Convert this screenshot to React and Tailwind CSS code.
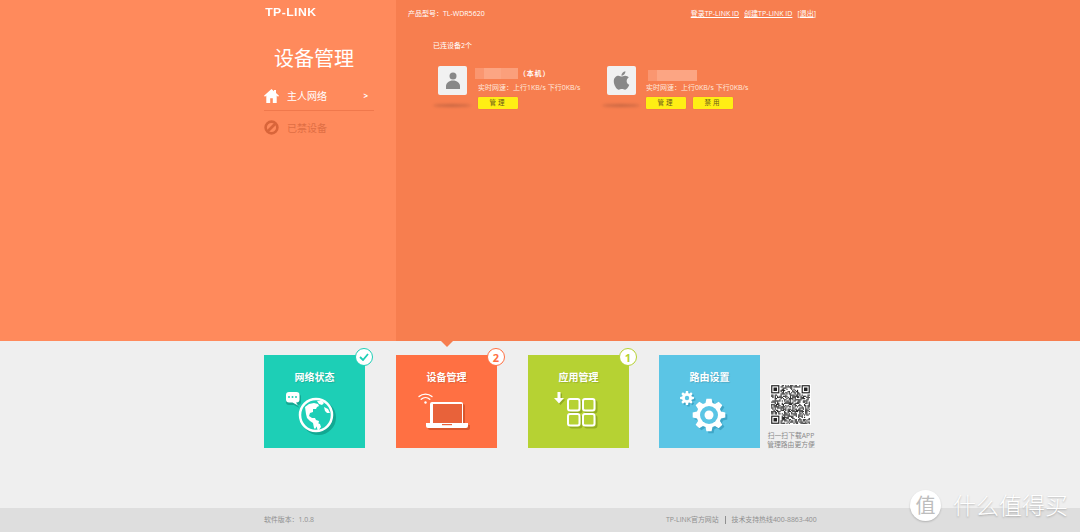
import React from "react";
import { FaApple } from "react-icons/fa";

const gearPath = (cx, cy, outer, inner, teeth) => {
  let d = "";
  const step = (Math.PI * 2) / teeth;
  for (let i = 0; i < teeth; i++) {
    const a = i * step;
    const pts = [
      [inner, a - step * 0.36],
      [outer, a - step * 0.2],
      [outer, a + step * 0.2],
      [inner, a + step * 0.36],
    ];
    pts.forEach(([r, t], j) => {
      d += `${i === 0 && j === 0 ? "M" : "L"}${(cx + r * Math.cos(t)).toFixed(2)} ${(cy + r * Math.sin(t)).toFixed(2)} `;
    });
  }
  return d + "Z";
};

const qrCells = (() => {
  const n = 33;
  const cells = [];
  let s = 12345;
  const inFinder = (x, y) => (x < 8 && y < 8) || (x > n - 9 && y < 8) || (x < 8 && y > n - 9);
  for (let y = 0; y < n; y++) {
    for (let x = 0; x < n; x++) {
      s = (s * 1103515245 + 12345) & 0x7fffffff;
      if (!inFinder(x, y) && (s >> 16) % 100 < 55) cells.push([x, y]);
    }
  }
  return cells;
})();

function Qr() {
  const finder = [[0, 0], [26, 0], [0, 26]];
  return (
    <svg width="41" height="41" viewBox="-1 -1 35 35" className="bg-white block">
      {qrCells.map(([x, y]) => (
        <rect key={`${x}-${y}`} x={x} y={y} width="1" height="1" fill="#222" />
      ))}
      {finder.map(([x, y]) => (
        <g key={`${x}${y}`}>
          <rect x={x + 0.5} y={y + 0.5} width="6" height="6" fill="none" stroke="#222" />
          <rect x={x + 2} y={y + 2} width="3" height="3" fill="#222" />
        </g>
      ))}
    </svg>
  );
}

function GlobeIcon() {
  return (
    <svg width="101" height="63" viewBox="0 30 101 63" className="block">
      <g fill="#12a892">
        <circle cx="54.5" cy="62.5" r="17.5" />
        <path d="M25 39h9a3 3 0 0 1 3 3v5a3 3 0 0 1-3 3h-.5l2 3-5.500-3h-5a3 3 0 0 1-3-3v-5a3 3 0 0 1 3-3z" />
      </g>
      <circle cx="52" cy="60" r="16" fill="#1DCFB6" stroke="#fff" strokeWidth="2.500" />
      <path fill="#fff" d="M41 52l4-3 5-1 4 1 1 2-2 1-1 2-3 0 0 3-3 1-1 3 3 2 3 0 1 2 3 1-1 4-3 4-1-1-1-5-3-2-3-3-1-4zM53 46l5 0 2 2-2 2-3-1zM60 52l4 2 2 4-3 0-2-2z" />
      <path fill="#fff" d="M53 68l3 1 1 3-3 4-1-3z" />
      <path fill="#fff" d="M25 37h7.500a3 3 0 0 1 3 3v4.500a3 3 0 0 1-3 3h-.5l2 3-5.500-3h-3.500a3 3 0 0 1-3-3v-4.500a3 3 0 0 1 3-3z" />
      <g fill="#1DCFB6">
        <circle cx="25" cy="42" r="1" />
        <circle cx="28.500" cy="42" r="1" />
        <circle cx="32" cy="42" r="1" />
      </g>
    </svg>
  );
}

function LaptopIcon() {
  return (
    <svg width="101" height="63" viewBox="0 30 101 63" className="block">
      <g fill="#d9572d" transform="translate(2 2)">
        <path d="M36 47h29a2 2 0 0 1 2 2v19h-33v-19a2 2 0 0 1 2-2zM30 68h42v3a2 2 0 0 1-2 2h-38a2 2 0 0 1-2-2z" />
      </g>
      <path fill="#fff" d="M36 47h29a2 2 0 0 1 2 2v19h-33v-19a2 2 0 0 1 2-2z" />
      <rect x="37" y="49" width="29" height="19" fill="#E8623A" />
      <path fill="#fff" d="M30 68h42v3a2 2 0 0 1-2 2h-38a2 2 0 0 1-2-2z" />
      <rect x="46" y="69" width="10" height="1.200" fill="#E8623A" />
      <g fill="none" stroke="#fff" strokeWidth="1.300" strokeLinecap="round">
        <path d="M23 41.500a10 10 0 0 1 13 0" />
        <path d="M25.200 44.300a6.500 6.500 0 0 1 8.600 0" />
      </g>
      <circle cx="29.500" cy="47.500" r="1.200" fill="#fff" />
    </svg>
  );
}

function AppsIcon() {
  const squares = [[40, 44], [55, 44], [40, 59], [55, 59]];
  return (
    <svg width="101" height="63" viewBox="0 30 101 63" className="block">
      <g transform="translate(2 2)" fill="none" stroke="#93ad22" strokeWidth="2">
        {squares.map(([x, y]) => (
          <rect key={`${x}${y}`} x={x} y={y} width="11.500" height="11.500" rx="2" />
        ))}
      </g>
      <path d="M29.500 37h3v6h3.500l-5 5.500-5-5.500h3.500z" fill="#93ad22" transform="translate(1.500 1.500)" />
      <g fill="#B6D233" stroke="#fff" strokeWidth="2">
        {squares.map(([x, y]) => (
          <rect key={`${x}${y}`} x={x} y={y} width="11.500" height="11.500" rx="2" />
        ))}
      </g>
      <path d="M29.500 37h3v6h3.500l-5 5.500-5-5.500h3.500z" fill="#fff" />
    </svg>
  );
}

function GearIcon() {
  return (
    <svg width="101" height="63" viewBox="0 30 101 63" className="block">
      <path d={gearPath(52, 62, 16.500, 12.500, 8)} fill="#3ea6c8" />
      <path d={gearPath(29.500, 44.500, 7, 5, 8)} fill="#3ea6c8" />
      <path d={gearPath(50, 60, 16.500, 12.500, 8)} fill="#fff" />
      <circle cx="50" cy="60" r="9" fill="#5BC5E5" />
      <circle cx="50" cy="60" r="4.500" fill="#fff" />
      <path d={gearPath(28, 43, 7, 5, 8)} fill="#fff" />
      <circle cx="28" cy="43" r="2.200" fill="#5BC5E5" />
    </svg>
  );
}

function Badge({ border, color, children }) {
  return (
    <div className={`absolute -right-[8px] -top-[7px] w-[18px] h-[18px] rounded-full bg-white border-[1.500px] flex items-center justify-center text-[11px] font-bold leading-none ${border} ${color}`}>
      {children}
    </div>
  );
}

function Tile({ title, bg, icon, badge }) {
  return (
    <div className={`relative w-[101px] h-[93px] shrink-0 ${bg}`}>
      <div className="h-[30px] pt-[15px] text-center text-[10px] font-bold leading-[14px] text-white [text-shadow:1px_1px_1px_rgba(0,0,0,0.15)]">{title}</div>
      {icon}
      {badge}
    </div>
  );
}

function Blur({ widths }) {
  return (
    <div className="flex">
      {widths.map(([w, c], i) => (
        <div key={i} className={`h-[11px] ${c}`} style={{ width: w }} />
      ))}
    </div>
  );
}

function YellowBtn({ children }) {
  return (
    <div className="w-[40px] h-[12px] rounded-[1px] bg-[#FFEE14] text-[#6b5a1a] text-[6.500px] leading-[12px] text-center tracking-[2px] shadow-[0_0_1px_rgba(0,0,0,0.2)]">{children}</div>
  );
}

function Avatar({ children }) {
  return (
    <div className="w-[30px] shrink-0">
      <div className="w-[29px] h-[29px] rounded-[2px] bg-[#F1F1F1] flex items-center justify-center">{children}</div>
      <div className="mt-[9px] -ml-[5px] w-[38px] h-[3px] rounded-[50%] bg-[#a9583a] blur-[1.500px] opacity-60" />
    </div>
  );
}

export default function App() {
  return (
    <div className="relative w-[1080px] h-[532px] overflow-hidden bg-[#EFEFEF] font-['Open_Sans','Noto_Sans_CJK_SC',sans-serif]">
      <div className="relative flex h-[341px]">
        <div className="w-[396px] shrink-0 bg-[#FF8A5C] pl-[264px]">
          <div className="h-[47px] pt-[5px] pl-[1px] text-[10.500px] font-bold leading-[14px] tracking-[0.4px] text-white font-['Liberation_Sans',sans-serif] scale-x-[1.160] origin-left">TP-LINK</div>
          <div className="w-[100px] text-center text-[20px] leading-[24px] text-white">设备管理</div>
          <div className="mt-[13px] w-[110px] h-[27px] flex items-center border-b border-[#F0784C] pb-[2px]">
            <svg width="15" height="14" viewBox="0 0 15 14" className="shrink-0">
              <path fill="#fff" d="M7.500 0L0 6.800l1 1L2.300 6.600V14h3.900V9.200h2.600V14h3.900V6.600L14 7.800l1-1L12 4.100V1h-2v1.300z" />
            </svg>
            <span className="ml-[8px] text-[10px] leading-[14px] text-white">主人网络</span>
            <span className="ml-auto mr-[6px] text-[8px] font-bold text-white">&gt;</span>
          </div>
          <div className="mt-[9px] flex items-center">
            <svg width="15" height="15" viewBox="0 0 15 15" className="shrink-0">
              <circle cx="7.500" cy="7.500" r="5.900" fill="none" stroke="#D9653A" strokeWidth="2.600" />
              <path d="M3.500 11.500l8-8" stroke="#D9653A" strokeWidth="2.600" />
            </svg>
            <span className="ml-[8px] text-[10px] leading-[14px] text-[#E06E44]">已禁设备</span>
          </div>
        </div>

        <div className="flex-1 bg-[#F77E4F] text-white text-[7px] leading-[10px]">
          <div className="flex w-[420px] justify-between pl-[12px] pt-[9px]">
            <span>产品型号：TL-WDR5620</span>
            <div className="flex whitespace-nowrap">
              <span className="underline">登录TP-LINK ID</span>
              <span className="underline ml-[5px]">创建TP-LINK ID</span>
              <span className="ml-[5px]">[<span className="underline">退出</span>]</span>
            </div>
          </div>
          <div className="pl-[37px] mt-[22px]">已连设备2个</div>
          <div className="flex mt-[11px] pt-[4px] pl-[42px]">
            <div className="flex w-[169px]">
              <Avatar>
                <svg width="14" height="17" viewBox="0 0 14 17">
                  <circle cx="7" cy="4" r="3.500" fill="#888" />
                  <path d="M0 17v-3c0-3 3-5.500 7-5.500s7 2.500 7 5.500v3z" fill="#888" />
                </svg>
              </Avatar>
              <div className="ml-[10px]">
                <div className="flex items-center h-[15px] -ml-[3px]">
                  <Blur widths={[[9, "bg-[#FA9670]"], [17, "bg-[#FCA583]"], [17, "bg-[#FB9F7B]"]]} />
                  <span className="ml-[1px] font-bold text-[7px] tracking-[0.8px]">（本机）</span>
                </div>
                <div className="mt-[2px] text-[#FFE9DE] whitespace-nowrap">实时网速：上行1KB/s<span className="ml-[2px]">下行0KB/s</span></div>
                <div className="mt-[4px] flex gap-[7px]"><YellowBtn>管理</YellowBtn></div>
              </div>
            </div>
            <div className="flex">
              <Avatar>
                <FaApple size={21} color="#888" />
              </Avatar>
              <div className="ml-[9px]">
                <div className="flex items-center h-[15px] pt-[4px] ml-[2px]">
                  <Blur widths={[[9, "bg-[#FA9670]"], [40, "bg-[#FCA583]"]]} />
                </div>
                <div className="mt-[2px] text-[#FFE9DE] whitespace-nowrap">实时网速：上行0KB/s<span className="ml-[2px]">下行0KB/s</span></div>
                <div className="mt-[4px] flex gap-[7px]"><YellowBtn>管理</YellowBtn><YellowBtn>禁用</YellowBtn></div>
              </div>
            </div>
          </div>
        </div>
        <div className="absolute left-[441px] top-full w-0 h-0 border-x-[6px] border-x-transparent border-t-[6px] border-t-[#F77E4F]" />
      </div>

      <div className="h-[167px] pl-[264px] pt-[14px] flex">
        <Tile title="网络状态" bg="bg-[#1DCFB6]" icon={<GlobeIcon />} badge={
          <Badge border="border-[#1DCFB6]" color="text-[#1DCFB6]">
            <svg width="10" height="8" viewBox="0 0 10 8"><path d="M1 4l3 3 5-6" fill="none" stroke="#1DCFB6" strokeWidth="1.800" /></svg>
          </Badge>
        } />
        <div className="w-[31px] shrink-0" />
        <Tile title="设备管理" bg="bg-[#FF7043]" icon={<LaptopIcon />} badge={<Badge border="border-[#FF7043]" color="text-[#FF7043]">2</Badge>} />
        <div className="w-[31px] shrink-0" />
        <Tile title="应用管理" bg="bg-[#B6D233]" icon={<AppsIcon />} badge={<Badge border="border-[#B6D233]" color="text-[#B6D233]">1</Badge>} />
        <div className="w-[30px] shrink-0" />
        <Tile title="路由设置" bg="bg-[#5BC5E5]" icon={<GearIcon />} />
        <div className="ml-[7px] w-[48px] pt-[29px] flex flex-col items-center text-[6.800px] leading-[9px] text-[#888] whitespace-nowrap">
          <div className="mr-[2px]"><Qr /></div>
          <div className="mt-[6px]">扫一扫下载APP</div>
          <div>管理路由更方便</div>
        </div>
      </div>

      <div className="h-[24px] bg-[#DEDEDE] pl-[264px] pt-[7px] flex items-start text-[6.900px] leading-[10px] text-[#8f8f8f]">
        <span>软件版本：1.0.8</span>
        <div className="ml-[352px] flex items-center whitespace-nowrap">
          <span>TP-LINK官方网站</span>
          <span className="mx-[6px] w-px h-[8px] bg-[#8f8f8f]" />
          <span>技术支持热线400-8863-400</span>
        </div>
      </div>

      <div className="absolute left-[910px] top-[490px] flex items-center">
        <div className="w-[31px] h-[31px] rounded-full bg-white flex items-center justify-center text-[20px] leading-none text-[#bdbdbd] shadow-[0_1px_2px_rgba(0,0,0,0.2)]">值</div>
        <div className="ml-[12px] text-[23px] leading-[31px] font-light text-white [text-shadow:0_1px_2px_rgba(0,0,0,0.25)]">什么值得买</div>
      </div>
    </div>
  );
}
